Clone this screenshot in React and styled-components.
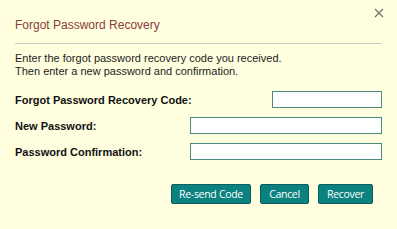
import React from 'react';
import styled, { createGlobalStyle } from 'styled-components';

const GlobalStyle = createGlobalStyle`
  html, body {
    margin: 0;
    padding: 0;
    background: #ffffe0;
  }
  body {
    font-family: "Liberation Sans", Arial, sans-serif;
    width: 397px;
    height: 229px;
    overflow: hidden;
  }
`

const Dialog = styled.div`
  position: relative;
  width: 397px;
  height: 229px;
  box-sizing: border-box;
  padding: 0 15px;
  background: #ffffe0;
`

const CloseButton = styled.button`
  position: absolute;
  top: 6px;
  right: 12px;
  width: 13px;
  height: 13px;
  padding: 0;
  border: none;
  background: transparent;
  display: flex;
  align-items: center;
  justify-content: center;
  cursor: pointer;
`

const Header = styled.div`
  padding: 18px 0 10px;
  border-bottom: 1px solid #c9c9c0;
`

const Title = styled.h1`
  margin: 0;
  font-size: 12px;
  line-height: 15px;
  font-weight: normal;
  color: #8a3b3b;
`

const Intro = styled.p`
  margin: 8px 0 0;
  font-size: 11px;
  line-height: 13px;
  color: #1c1c1c;
`

const Form = styled.div`
  display: flex;
  flex-direction: column;
  gap: 9px;
  margin-top: 13px;
`

const Row = styled.div`
  display: flex;
  align-items: center;
  justify-content: space-between;
  height: 17px;
`

const Label = styled.label`
  font-size: 11px;
  font-weight: bold;
  color: #111;
`

const Input = styled.input`
  box-sizing: border-box;
  width: ${p => p.$width}px;
  height: 17px;
  margin: 0;
  padding: 1px 3px;
  border: 1px solid #4b8a82;
  background: #fff;
  font-size: 11px;
  font-family: "Liberation Sans", Arial, sans-serif;
`

const Actions = styled.div`
  display: flex;
  justify-content: flex-end;
  gap: 9px;
  margin-top: 24px;
  padding-right: 9px;
`

const Button = styled.button`
  box-sizing: border-box;
  width: ${p => p.$width}px;
  height: 20px;
  padding: 0;
  border: 1px solid #0b5e5c;
  border-radius: 2px;
  background: #0b8280;
  color: #fff;
  font-family: "Open Sans", "Liberation Sans", sans-serif;
  font-size: 10.5px;
  letter-spacing: -0.3px;
  cursor: pointer;
`

const CloseIcon = () => (
  <svg width="10" height="10" viewBox="0 0 10 10">
    <path d="M1 1 L9 9 M9 1 L1 9" stroke="#6f6f6a" strokeWidth="1.2" fill="none" />
  </svg>
)

const App = () => {
  return (
    <>
      <GlobalStyle />
      <Dialog>
        <CloseButton aria-label="Close"><CloseIcon /></CloseButton>
        <Header>
          <Title>Forgot Password Recovery</Title>
        </Header>
        <Intro>
          Enter the forgot password recovery code you received.<br />
          Then enter a new password and confirmation.
        </Intro>
        <Form>
          <Row>
            <Label>Forgot Password Recovery Code:</Label>
            <Input $width={110} />
          </Row>
          <Row>
            <Label>New Password:</Label>
            <Input $width={192} type="password" />
          </Row>
          <Row>
            <Label>Password Confirmation:</Label>
            <Input $width={192} type="password" />
          </Row>
        </Form>
        <Actions>
          <Button $width={80}>Re-send Code</Button>
          <Button $width={49}>Cancel</Button>
          <Button $width={55}>Recover</Button>
        </Actions>
      </Dialog>
    </>
  )
}

export default App
